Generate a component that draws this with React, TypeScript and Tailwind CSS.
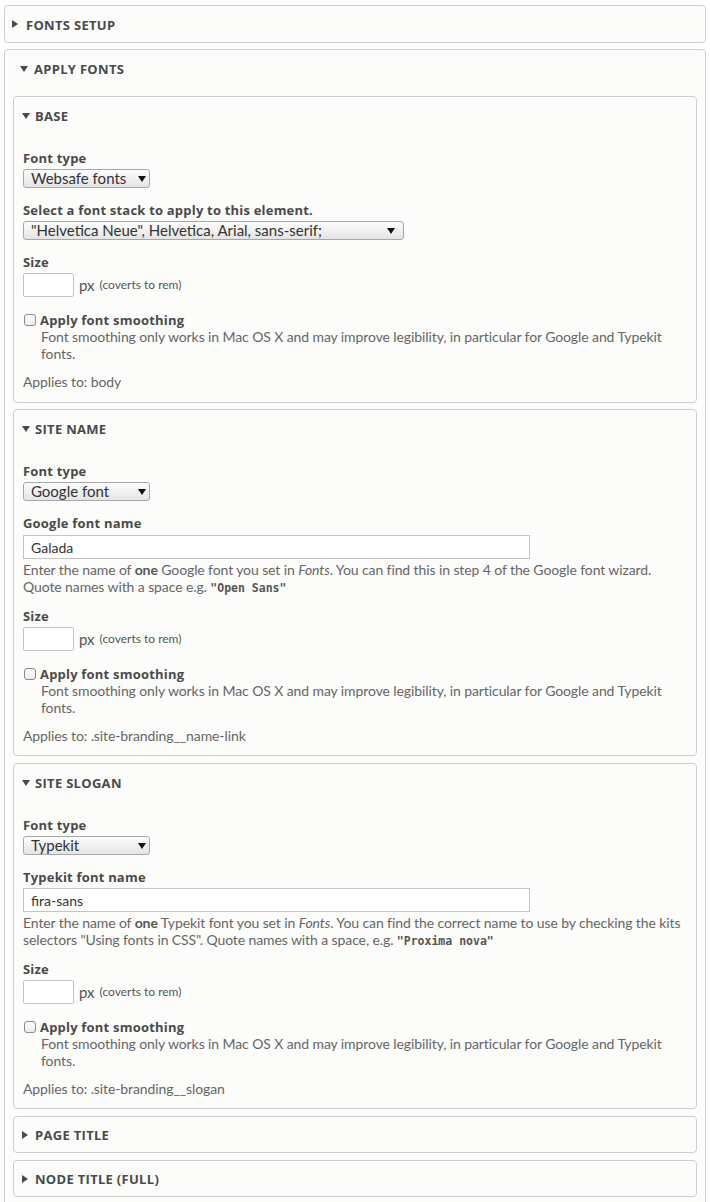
import React from "react";

const SANS = "font-['Lato','Roboto',sans-serif]";
const BOLD = "font-['Open_Sans','Lato',sans-serif] font-bold";

function Tri({ open }: { open: boolean }) {
  return open ? (
    <svg width="8" height="6" viewBox="0 0 8 6" className="block">
      <path d="M0 0H8L4 6Z" fill="#4a4a4a" />
    </svg>
  ) : (
    <svg width="6" height="8" viewBox="0 0 6 8" className="block">
      <path d="M0 0L6 4L0 8Z" fill="#4a4a4a" />
    </svg>
  );
}

function Legend({ title, open, inner }: { title: string; open: boolean; inner?: boolean }) {
  return (
    <div
      className={
        "flex items-center " +
        (open ? "h-[37px] " : inner ? "h-[35px] " : "h-[36px] ") +
        (inner ? "pl-[8px]" : "pl-[7px]")
      }
    >
      <span className={(inner ? "w-[13px]" : "w-[14px]") + " flex items-center"}>
        <Tri open={open} />
      </span>
      <span className={BOLD + " pt-[2px] text-[13px] uppercase leading-[15px] tracking-[0.3px] text-[#4a4a4a]"}>{title}</span>
    </div>
  );
}

function Label({ children, className = "" }: { children: React.ReactNode; className?: string }) {
  return (
    <div className={BOLD + " pt-[2px] text-[13px] leading-[15px] tracking-[0.2px] text-[#4a4a4a] " + className}>{children}</div>
  );
}

function Select({ value, width, pr }: { value: string; width: string; pr: string }) {
  return (
    <div
      className={
        "mt-[3px] flex h-[19px] items-center justify-between rounded-[3px] border border-[#a8a8a8] bg-gradient-to-b from-[#fdfdfd] to-[#e4e4e4] pl-[7px] text-[15px] leading-[17px] text-[#333] " +
        width +
        " " +
        pr
      }
    >
      <span>{value}</span>
      <svg width="8" height="6" viewBox="0 0 8 6" className="block">
        <path d="M0 0H8L4 6Z" fill="#111" />
      </svg>
    </div>
  );
}

function TextInput({ value, mt }: { value: string; mt: string }) {
  return (
    <div className={"flex h-[24px] w-[507px] items-center border border-[#c4c4c4] bg-white pl-[7px] text-[14px] text-[#333] " + mt}>
      {value}
    </div>
  );
}

function SizeRow({ first }: { first?: boolean }) {
  return (
    <>
      <Label className={first ? "mt-[13px]" : "mt-[12px]"}>Size</Label>
      <div className="mt-[3px] flex h-[24px] items-center leading-none">
        <div className="h-[24px] w-[51px] rounded-[2px] border border-[#c4c4c4] bg-white" />
        <span className="ml-[5px] text-[15px] leading-none text-[#555]">px</span>
        <span className="ml-[5px] text-[12px] leading-none text-[#555]">(coverts to rem)</span>
      </div>
    </>
  );
}

const DESC = "text-[14px] leading-[17px] tracking-[-0.1px] text-[#666]";

function Smoothing() {
  return (
    <>
      <div className="mt-[14px] flex h-[17px] items-center">
        <span className="ml-[1px] mr-[4px] block h-[12px] w-[12px] rounded-[3px] border border-[#8a8a8a] bg-gradient-to-b from-white to-[#ececec]" />
        <Label>Apply font smoothing</Label>
      </div>
      <div className={"pl-[18px] " + DESC}>
        Font smoothing only works in Mac OS X and may improve legibility, in particular for Google and Typekit
        <br />
        fonts.
      </div>
    </>
  );
}

function Applies({ to }: { to: string }) {
  return <div className={"mt-[11px] " + DESC}>Applies to: {to}</div>;
}

function Collapsed({ title, inner, className = "" }: { title: string; inner?: boolean; className?: string }) {
  return (
    <div className={"rounded-[4px] border border-[#cfcfcf] bg-[#fcfcfa] " + className}>
      <Legend title={title} open={false} inner={inner} />
    </div>
  );
}

const mono = "font-['DejaVu_Sans_Mono',monospace] text-[11.5px] font-bold leading-none tracking-normal text-[#555]";

export default function App() {
  return (
    <div className={"min-h-[1202px] bg-white px-[4px] pt-[5px] " + SANS}>
      <Collapsed title="Fonts setup" />
      <div className="mt-[6px] rounded-[4px] border border-[#cfcfcf] bg-[#fcfcfa] px-[8px] pb-[10px]">
        <Legend title="Apply fonts" open />
        <div className="pt-[9px]">
          {/* BASE */}
          <div className="rounded-[4px] border border-[#cfcfcf] bg-[#fcfcfa]">
            <Legend title="Base" open inner />
            <div className="px-[9px] pb-[12px] pt-[15px]">
              <Label>Font type</Label>
              <Select value="Websafe fonts" width="w-[127px]" pr="pr-[3px]" />
              <Label className="mt-[13px]">Select a font stack to apply to this element.</Label>
              <Select value={'"Helvetica Neue", Helvetica, Arial, sans-serif;'} width="w-[381px]" pr="pr-[8px]" />
              <SizeRow first />
              <Smoothing />
              <Applies to="body" />
            </div>
          </div>

          {/* SITE NAME */}
          <div className="mt-[6px] rounded-[4px] border border-[#cfcfcf] bg-[#fcfcfa]">
            <Legend title="Site name" open inner />
            <div className="px-[9px] pb-[11px] pt-[15px]">
              <Label>Font type</Label>
              <Select value="Google font" width="w-[127px]" pr="pr-[3px]" />
              <Label className="mt-[13px]">Google font name</Label>
              <TextInput value="Galada" mt="mt-[4px]" />
              <div className={"mt-[2px] " + DESC}>
                Enter the name of <b className="text-[#555]">one</b> Google font you set in <i>Fonts</i>. You can find this in step 4 of the Google font wizard.
                <br />
                Quote names with a space e.g. <span className={mono}>"Open Sans"</span>
              </div>
              <SizeRow />
              <Smoothing />
              <Applies to=".site-branding__name-link" />
            </div>
          </div>

          {/* SITE SLOGAN */}
          <div className="mt-[7px] rounded-[4px] border border-[#cfcfcf] bg-[#fcfcfa]">
            <Legend title="Site slogan" open inner />
            <div className="px-[9px] pb-[11px] pt-[15px]">
              <Label>Font type</Label>
              <Select value="Typekit" width="w-[127px]" pr="pr-[3px]" />
              <Label className="mt-[13px]">Typekit font name</Label>
              <TextInput value="fira-sans" mt="mt-[3px]" />
              <div className={"mt-[2px] " + DESC}>
                Enter the name of <b className="text-[#555]">one</b> Typekit font you set in <i>Fonts</i>. You can find the correct name to use by checking the kits
                <br />
                selectors "Using fonts in CSS". Quote names with a space, e.g. <span className={mono}>"Proxima nova"</span>
              </div>
              <SizeRow />
              <Smoothing />
              <Applies to=".site-branding__slogan" />
            </div>
          </div>

          <Collapsed title="Page title" inner className="mt-[7px]" />
          <Collapsed title="Node title (full)" inner className="mt-[7px]" />
        </div>
      </div>
    </div>
  );
}
